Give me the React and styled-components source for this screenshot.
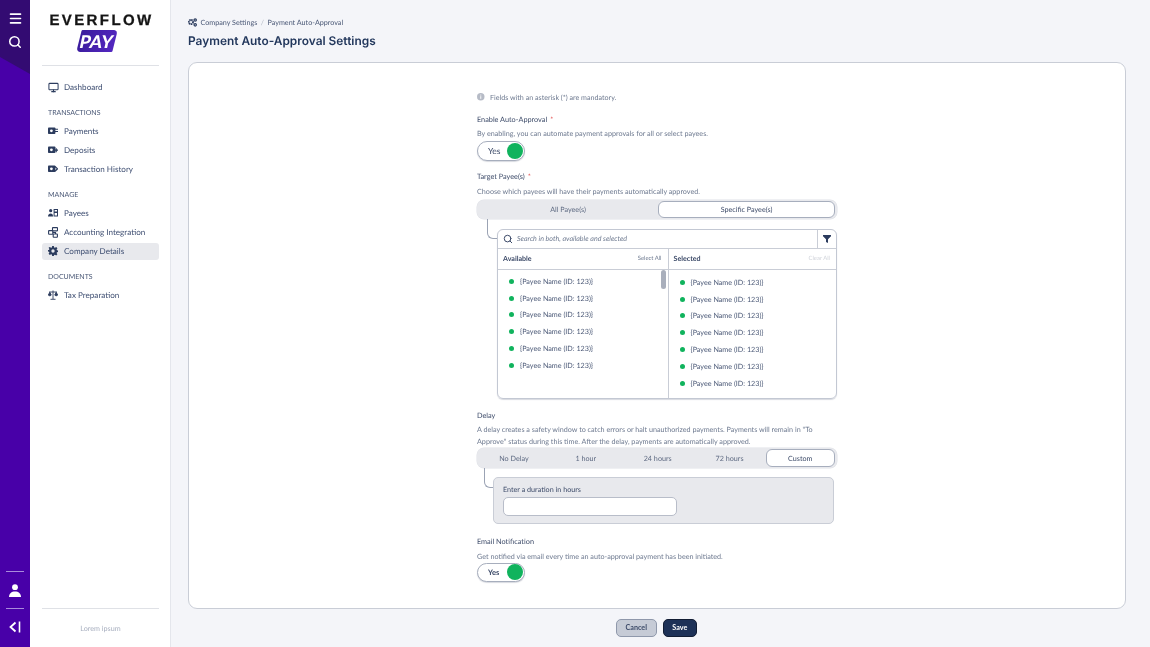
import React from 'react';
import styled, { createGlobalStyle } from 'styled-components';
import { Monitor, Menu, Search } from 'lucide-react';

const Global = createGlobalStyle`
  html, body { margin: 0; padding: 0; height: 100%; }
  body {
    font-family: Lato, "Noto Sans", sans-serif;
    background: #f4f5f9;
    color: #2c3c5e;
    text-rendering: geometricPrecision;
  }
  * { box-sizing: border-box; }
`;

const Page = styled.div`
  display: flex;
  width: 1150px;
  height: 647px;
  overflow: hidden;
  will-change: transform;
`;

const Rail = styled.aside`
  width: 30px;
  flex: none;
  background: #4800a8;
  display: flex;
  flex-direction: column;
  align-items: center;
  position: relative;
`;
const RailCorner = styled.div`
  position: absolute;
  inset: 0 0 auto 0;
  height: 74px;
  background: #330b72;
  clip-path: polygon(0 0, 100% 0, 100% 100%, 0 77%);
`;
const RailTop = styled.div`
  position: relative;
  display: flex;
  flex-direction: column;
  align-items: center;
  gap: 9px;
  padding-top: 11px;
  color: #fff;
`;
const RailBottom = styled.div`
  margin-top: auto;
  display: flex;
  flex-direction: column;
  align-items: center;
  color: #fff;
  padding-bottom: 3px;
`;
const RailRule = styled.div`
  width: 18px;
  height: 1px;
  background: #a98bdc;
`;
const RailIcon = styled.div`
  height: ${p => p.$h}px;
  display: flex;
  align-items: center;
  justify-content: center;
`;

const Nav = styled.nav`
  width: 141px;
  flex: none;
  background: #fff;
  border-right: 1px solid #e4e6ec;
  padding: 0 11px 0 12px;
  display: flex;
  flex-direction: column;
`;
const Logo = styled.div`
  height: 66px;
  border-bottom: 1px solid #dfe1e6;
  display: flex;
  flex-direction: column;
  align-items: center;
  padding-top: 13px;
`;
const LogoWord = styled.div`
  font-family: "Liberation Sans", sans-serif;
  font-weight: 700;
  font-size: 15px;
  line-height: 16px;
  letter-spacing: 2.4px;
  color: #141414;
  margin-right: -2px;
  -webkit-text-stroke: 0.3px #141414;
`;
const LogoBadge = styled.div`
  margin: 1px 7px 0 0;
  width: 36px;
  height: 22px;
  background: linear-gradient(100deg, #3a1c9c, #5327c0);
  transform: skewX(-14deg);
  border-radius: 1px 4px 1px 4px;
  display: flex;
  align-items: center;
  justify-content: center;
`;
const LogoPay = styled.span`
  font-family: Lato, sans-serif;
  font-weight: 900;
  font-size: 17.5px;
  color: #fff;
  transform: skewX(2deg);
  letter-spacing: 0.2px;
`;
const NavItem = styled.div`
  height: 17.5px;
  margin-top: ${p => p.$mt ?? 0}px;
  margin-bottom: ${p => p.$mb ?? 1.8}px;
  border-radius: 3px;
  display: flex;
  align-items: center;
  gap: 6px;
  padding-left: 6px;
  font-size: 8.1px;
  color: #3f4f72;
  background: ${p => (p.$active ? '#e8e9ed' : 'transparent')};
`;
const NavIcon = styled.span`
  flex: none;
  width: 10px;
  display: flex;
  align-items: center;
  justify-content: center;
  color: #2c3c5e;
  svg { flex: none; }
`;
const NavHeading = styled.div`
  font-size: 7px;
  line-height: 9px;
  color: #4a5876;
  padding-left: 6px;
  margin: 12.75px 0 4.25px;
`;
const NavFoot = styled.div`
  margin-top: auto;
  height: 39px;
  border-top: 1px solid #dfe1e6;
  display: flex;
  align-items: center;
  justify-content: center;
  font-size: 7.2px;
  color: #a8afbf;
`;

const Main = styled.main`
  flex: 1;
  min-width: 0;
  padding: 16px 24px 0 17px;
  display: flex;
  flex-direction: column;
`;
const Crumbs = styled.div`
  display: flex;
  align-items: center;
  gap: 3.5px;
  height: 12px;
  font-size: 7.2px;
  color: #4a5876;
  svg { color: #2c3c5e; }
`;
const Slash = styled.span`
  color: #b5bac6;
`;
const Title = styled.h1`
  margin: 5px 0 0;
  font-family: Inter, sans-serif;
  font-size: 11.9px;
  line-height: 15px;
  font-weight: 600;
  color: #22375c;
`;
const Card = styled.section`
  margin-top: 14px;
  height: 546.5px;
  background: #fff;
  border: 1px solid #c9cdd6;
  border-radius: 9px;
  display: flex;
  justify-content: center;
  padding-top: 28px;
`;
const Form = styled.div`
  width: 360px;
  display: flex;
  flex-direction: column;
  align-items: flex-start;
`;
const Note = styled.div`
  display: flex;
  align-items: center;
  gap: 5.5px;
  height: 12px;
  font-size: 7.15px;
  color: #6e7a90;
`;
const Label = styled.div`
  font-size: 7.3px;
  line-height: 11px;
  color: #3d4b69;
  margin-top: ${p => p.$mt}px;
  em { color: #e24a4a; font-style: normal; margin-left: 3px; }
`;
const Desc = styled.p`
  margin: ${p => p.$mt ?? 3}px 0 0;
  font-size: 7.2px;
  line-height: 12px;
  color: #6e7a90;
  width: 100%;
`;
const Toggle = styled.div`
  margin-top: ${p => p.$mt ?? 1}px;
  width: 48px;
  height: 19.5px;
  border: 1px solid #a7aebd;
  border-radius: 10px;
  background: #fff;
  box-shadow: 0 1px 1px rgba(60, 70, 100, 0.2);
  display: flex;
  align-items: center;
  justify-content: space-between;
  padding: 0 1px 0 ${p => p.$pad}px;
  font-size: ${p => p.$fs}px;
  font-weight: ${p => p.$w};
  color: #3d4b69;
`;
const Knob = styled.span`
  width: 16px;
  height: 16px;
  border-radius: 50%;
  background: #10b35d;
`;
const Segments = styled.div`
  margin-top: ${p => p.$mt}px;
  width: 360px;
  height: ${p => p.$h ?? 19}px;
  background: #e8e9ed;
  border-radius: 7px;
  padding: 1px;
  display: flex;
  font-size: 7.2px;
  color: #5e6a82;
  box-shadow: 0 0 0 0.5px #e0e2e8;
`;
const Segment = styled.div`
  flex: ${p => (p.$width ? 'none' : '1')};
  width: ${p => p.$width ?? 'auto'};
  margin-right: ${p => (p.$inset ? '1px' : '0')};
  display: flex;
  align-items: center;
  justify-content: center;
  border-radius: 6px;
  background: ${p => (p.$on ? '#fff' : 'transparent')};
  border: ${p => (p.$on ? '1px solid #a7aebd' : 'none')};
  color: ${p => (p.$on ? '#3d4b69' : '#5e6a82')};
`;
const Branch = styled.div`
  display: flex;
  align-items: flex-start;
  width: 360px;
`;
const Elbow = styled.div`
  flex: none;
  width: ${p => p.$w}px;
  height: 19.5px;
  margin-left: ${p => p.$ml}px;
  border-left: 1px solid #9ba3b4;
  border-bottom: 1px solid #9ba3b4;
  border-bottom-left-radius: 6px;
`;
const Picker = styled.div`
  margin-top: 9.5px;
  width: 340px;
  height: 170px;
  border: 1px solid #c3c8d3;
  border-radius: 6px;
  box-shadow: 0 1px 1px rgba(60, 70, 100, 0.2);
  display: flex;
  flex-direction: column;
  overflow: hidden;
`;
const SearchRow = styled.div`
  height: 19px;
  flex: none;
  display: flex;
  align-items: center;
  border-bottom: 1px solid #c9cdd6;
`;
const SearchField = styled.div`
  flex: 1;
  display: flex;
  align-items: center;
  gap: 4px;
  padding-left: 5px;
  font-size: 7.1px;
  font-style: italic;
  color: #6e7a90;
  svg { color: #3d4b69; }
`;
const FilterBox = styled.div`
  width: 19px;
  height: 100%;
  border-left: 1px solid #c9cdd6;
  display: flex;
  align-items: center;
  justify-content: center;
  color: #2c3c5e;
`;
const Columns = styled.div`
  flex: 1;
  display: flex;
  min-height: 0;
`;
const Column = styled.div`
  width: ${p => p.$w}px;
  flex: none;
  display: flex;
  flex-direction: column;
  position: relative;
  & + & { border-left: 1px solid #c9cdd6; }
`;
const ColumnHead = styled.div`
  height: 21px;
  flex: none;
  border-bottom: 1px solid #c9cdd6;
  display: flex;
  align-items: center;
  justify-content: space-between;
  padding: 0 6px 0 5px;
  font-size: 7.1px;
  font-weight: 700;
  color: #3d4b69;
`;
const HeadAction = styled.span`
  font-size: 5.9px;
  font-weight: 400;
  color: ${p => (p.$muted ? '#d0d3da' : '#6e7a90')};
`;
const Rows = styled.div`
  padding-top: ${p => p.$pt}px;
`;
const Row = styled.div`
  height: 16.8px;
  display: flex;
  align-items: center;
  gap: 6px;
  padding-left: 11px;
  font-size: 7.2px;
  color: #4a5876;
`;
const Dot = styled.span`
  width: 5px;
  height: 5px;
  border-radius: 50%;
  background: #10b35d;
`;
const Thumb = styled.div`
  position: absolute;
  top: 21px;
  right: 2px;
  width: 5px;
  height: 19px;
  border-radius: 3px;
  background: #a9afbc;
`;
const DurationPanel = styled.div`
  margin-top: 9px;
  width: 341px;
  height: 47px;
  background: #e8e9ed;
  border: 1px solid #c9cdd6;
  border-radius: 5px;
  padding: 7px 9px 0;
  font-size: 7.2px;
  color: #3d4b69;
  line-height: 10px;
`;
const DurationInput = styled.div`
  margin-top: 2px;
  width: 173.5px;
  height: 18.5px;
  background: #fff;
  border: 1px solid #b8bdc9;
  border-radius: 5px;
`;
const Actions = styled.div`
  margin-top: 10.5px;
  padding-right: 1px;
  display: flex;
  justify-content: center;
  gap: 6px;
`;
const Button = styled.button`
  height: 17.5px;
  width: ${p => p.$w}px;
  padding: 0;
  border-radius: 5px;
  font-family: Lato, sans-serif;
  font-size: 7.2px;
  font-weight: 700;
  border: 1px solid ${p => (p.$primary ? '#111c33' : '#8f98ab')};
  background: ${p => (p.$primary ? '#1d3157' : '#c6cbd6')};
  color: ${p => (p.$primary ? '#fff' : '#3d4b69')};
`;

const InfoDot = () => (
  <svg width="7.500" height="7.500" viewBox="0 0 8 8">
    <circle cx="4" cy="4" r="4" fill="#b6bbc6" />
    <path d="M4 3.400v2.800M4 1.700v1" stroke="#fff" strokeWidth="1" />
  </svg>
);
const FilterGlyph = () => (
  <svg width="8" height="8" viewBox="0 0 8 8" fill="currentColor">
    <path d="M0 0h8v1.300L5 4.300V8L3 7V4.300L0 1.300z" />
  </svg>
);
const TxIcon = ({ kind }) => (
  <svg width="10" height="10" viewBox="0 0 10 10" fill="none">
    <rect x="0" y="1.500" width="7.400" height="6.500" rx="0.800" fill="currentColor" />
    <circle cx="3.400" cy="4.800" r="1.400" fill="#fff" />
    {kind === 'minus' && <path d="M6.500 3.200h3.500M6.500 5.500h3.500" stroke="currentColor" strokeWidth="1.100" />}
    {kind === 'plus' && <path d="M8.200 3.200v4M6.300 5.200h3.700" stroke="currentColor" strokeWidth="1.200" />}
    {kind === 'arrow' && <path d="M7 2.500l2.500 2.300L7 7.200" stroke="currentColor" strokeWidth="1.200" />}
  </svg>
);
const PayeesIcon = () => (
  <svg width="10" height="10" viewBox="0 0 10 10" fill="currentColor">
    <circle cx="2.700" cy="2.700" r="1.600" />
    <path d="M0 8.600c0-2 1.200-3.200 2.700-3.200S5 6.600 5 8.600z" />
    <path fillRule="evenodd" d="M5.600 1h4.400v7.600H5.600zM6.600 2v1.600h2.400V2zM6.600 5v2.400h2.400V5z" />
  </svg>
);
const IntegrationIcon = () => (
  <svg width="10" height="11" viewBox="0 0 10 11" fill="none" stroke="currentColor" strokeWidth="1.100">
    <rect x="4.500" y="0.600" width="5" height="3.300" rx="0.500" />
    <rect x="0.600" y="3.600" width="4.200" height="3.600" rx="0.500" />
    <rect x="5.200" y="7" width="4.200" height="3.300" rx="0.500" />
    <path d="M4.800 5.500h2.700V7" />
  </svg>
);
const GearIcon = () => (
  <svg width="10" height="10" viewBox="0 0 24 24" fill="currentColor">
    <path fillRule="evenodd" d="M10 0h4l.7 3.400 2 .9 3-1.900 2.900 2.900-1.900 3 .9 2L25 11v3l-3.400.7-.9 2 1.900 3-2.900 2.900-3-1.900-2 .9L14 24h-4l-.7-3.400-2-.9-3 1.900L1.400 18.700l1.900-3-.9-2L-1 13v-3l3.400-.7.9-2-1.900-3L4.300 2.400l3 1.900 2-.9zM12 8a4 4 0 100 8 4 4 0 000-8z" />
  </svg>
);
const TaxIcon = () => (
  <svg width="10" height="10" viewBox="0 0 10 10" fill="none" stroke="currentColor" strokeWidth="0.900">
    <path d="M5 0.500v8.500M1 2h8M2.500 9.300h5" />
    <path d="M0.300 5L1.800 2.300 3.300 5c-.3 1-2.700 1-3 0zM6.700 5L8.200 2.300 9.700 5c-.3 1-2.700 1-3 0z" fill="currentColor" />
  </svg>
);
const CogsIcon = () => (
  <svg width="9" height="9" viewBox="0 0 10 10" fill="none" stroke="currentColor">
    <circle cx="3.300" cy="4.500" r="2.300" strokeWidth="2" strokeDasharray="1.500 0.500" />
    <circle cx="8" cy="2.200" r="1.300" strokeWidth="1.400" />
    <circle cx="8" cy="7.600" r="1.300" strokeWidth="1.400" />
  </svg>
);
const Collapse = () => (
  <svg width="12" height="12" viewBox="0 0 12 12" fill="none" stroke="#fff" strokeWidth="1.800">
    <path d="M6.500 1.500L1.500 6l5 4.500" />
    <path d="M10.500 0.500v11" strokeWidth="1.600" />
  </svg>
);
const PersonIcon = () => (
  <svg width="12" height="13" viewBox="0 0 12 13" fill="#fff">
    <circle cx="6" cy="3.200" r="2.900" />
    <path d="M0 13c0-3.600 2.500-5.600 6-5.600s6 2 6 5.600z" />
  </svg>
);

const payee = '{Payee Name (ID: 123)}';
const PayeeRows = ({ count, pt }) => (
  <Rows $pt={pt}>
    {Array.from({ length: count }, (_, i) => (
      <Row key={i}><Dot />{payee}</Row>
    ))}
  </Rows>
);

export default function App() {
  return (
    <Page>
      <Global />
      <Rail>
        <RailCorner />
        <RailTop>
          <Menu size={15} strokeWidth={2.6} />
          <Search size={14} strokeWidth={2.6} />
        </RailTop>
        <RailBottom>
          <RailRule />
          <RailIcon $h={36}><PersonIcon /></RailIcon>
          <RailRule />
          <RailIcon $h={35}><Collapse /></RailIcon>
        </RailBottom>
      </Rail>
      <Nav>
        <Logo>
          <LogoWord>EVERFLOW</LogoWord>
          <LogoBadge><LogoPay>PAY</LogoPay></LogoBadge>
        </Logo>
        <NavItem $mt={12.5} $mb={0}><NavIcon><Monitor size={11} strokeWidth={2.2} /></NavIcon>Dashboard</NavItem>
        <NavHeading>TRANSACTIONS</NavHeading>
        <NavItem><NavIcon><TxIcon kind="minus" /></NavIcon>Payments</NavItem>
        <NavItem><NavIcon><TxIcon kind="plus" /></NavIcon>Deposits</NavItem>
        <NavItem $mb={0}><NavIcon><TxIcon kind="arrow" /></NavIcon>Transaction History</NavItem>
        <NavHeading>MANAGE</NavHeading>
        <NavItem><NavIcon><PayeesIcon /></NavIcon>Payees</NavItem>
        <NavItem><NavIcon><IntegrationIcon /></NavIcon>Accounting Integration</NavItem>
        <NavItem $active $mb={0}><NavIcon><GearIcon /></NavIcon>Company Details</NavItem>
        <NavHeading>DOCUMENTS</NavHeading>
        <NavItem><NavIcon><TaxIcon /></NavIcon>Tax Preparation</NavItem>
        <NavFoot>Lorem ipsum</NavFoot>
      </Nav>
      <Main>
        <Crumbs>
          <CogsIcon />
          <span>Company Settings</span>
          <Slash>/</Slash>
          <span>Payment Auto-Approval</span>
        </Crumbs>
        <Title>Payment Auto-Approval Settings</Title>
        <Card>
          <Form>
            <Note><InfoDot />Fields with an asterisk (*) are mandatory.</Note>
            <Label $mt={11}>Enable Auto-Approval<em>*</em></Label>
            <Desc>By enabling, you can automate payment approvals for all or select payees.</Desc>
            <Toggle $pad={10} $fs={8.5} $w={400}>Yes<Knob /></Toggle>
            <Label $mt={10.5}>Target Payee(s)<em>*</em></Label>
            <Desc $mt={3.5}>Choose which payees will have their payments automatically approved.</Desc>
            <Segments $mt={2.5}>
              <Segment $width="180px">All Payee(s)</Segment>
              <Segment $on $width="177px">Specific Payee(s)</Segment>
            </Segments>
            <Branch>
              <Elbow $w={10} $ml={10} />
              <Picker>
                <SearchRow>
                  <SearchField><Search size={10} strokeWidth={2.4} />Search in both, available and selected</SearchField>
                  <FilterBox><FilterGlyph /></FilterBox>
                </SearchRow>
                <Columns>
                  <Column $w={169.5}>
                    <ColumnHead>Available<HeadAction>Select All</HeadAction></ColumnHead>
                    <PayeeRows count={6} pt={3.5} />
                    <Thumb />
                  </Column>
                  <Column $w={168.5}>
                    <ColumnHead>Selected<HeadAction $muted>Clear All</HeadAction></ColumnHead>
                    <PayeeRows count={7} pt={4.5} />
                  </Column>
                </Columns>
              </Picker>
            </Branch>
            <Label $mt={11}>Delay</Label>
            <Desc $mt={3.5}>A delay creates a safety window to catch errors or halt unauthorized payments. Payments will remain in "To Approve" status during this time. After the delay, payments are automatically approved.</Desc>
            <Segments $mt={0} $h={20}>
              <Segment>No Delay</Segment>
              <Segment>1 hour</Segment>
              <Segment>24 hours</Segment>
              <Segment>72 hours</Segment>
              <Segment $on $inset $width="69.5px">Custom</Segment>
            </Segments>
            <Branch>
              <Elbow $w={9} $ml={7} />
              <DurationPanel>
                Enter a duration in hours
                <DurationInput />
              </DurationPanel>
            </Branch>
            <Label $mt={12}>Email Notification</Label>
            <Desc $mt={3.5}>Get notified via email every time an auto-approval payment has been initiated.</Desc>
            <Toggle $mt={0} $pad={10} $fs={7.5} $w={700}>Yes<Knob /></Toggle>
          </Form>
        </Card>
        <Actions>
          <Button $w={40.5}>Cancel</Button>
          <Button $primary $w={34.5}>Save</Button>
        </Actions>
      </Main>
    </Page>
  );
}
